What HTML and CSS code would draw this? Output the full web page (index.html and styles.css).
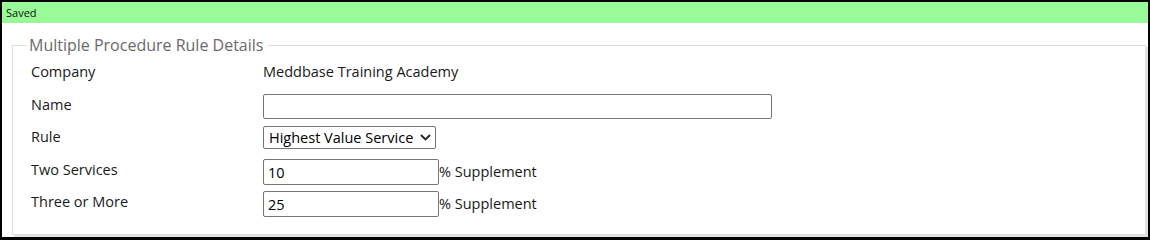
FILE: index.html
```html
<!DOCTYPE html>
<html>
<head>
<meta charset="utf-8">
<link rel="stylesheet" href="styles.css">
</head>
<body>
<div class="frame">
  <div class="status">Saved</div>
  <fieldset class="details">
    <legend>Multiple Procedure Rule Details</legend>
    <div class="grid">
      <div class="label first">Company</div>
      <div class="value first">Meddbase Training Academy</div>

      <div class="label">Name</div>
      <div class="value"><input class="text wide" type="text" value=""></div>

      <div class="label">Rule</div>
      <div class="value">
        <span class="select-wrap">
          <select class="select"><option>Highest Value Service</option></select>
          <svg class="chev" width="11" height="7" viewBox="0 0 11 7"><path d="M1 1l4.5 4.5L10 1" fill="none" stroke="#222" stroke-width="1.8"/></svg>
        </span>
      </div>

      <div class="label">Two Services</div>
      <div class="value"><input class="text short" type="text" value="10"><span class="suffix">% Supplement</span></div>

      <div class="label">Three or More</div>
      <div class="value"><input class="text short" type="text" value="25"><span class="suffix">% Supplement</span></div>
    </div>
  </fieldset>
</div>
</body>
</html>
```

FILE: styles.css
```css
html, body {
  margin: 0;
  padding: 0;
  background: #fff;
}

.frame {
  box-sizing: border-box;
  width: 1150px;
  height: 240px;
  border: solid #000;
  border-width: 2px 2px 3px 2px;
  display: flex;
  flex-direction: column;
  font-family: "Open Sans", "Noto Sans", sans-serif;
  color: #1a1a1a;
}

.status {
  height: 21px;
  flex: none;
  background: #98fb98;
  font-size: 11px;
  line-height: 21px;
  padding-left: 4px;
  color: #111;
}

.details {
  flex: 1;
  margin: 12px 2px 2px 10px;
  padding: 7px 0 0 14px;
  border: 1px solid #dedede;
  box-shadow: 2px 2px 0 #e4e4e4;
  min-width: 0;
}

.details legend {
  padding: 0 5px 0 2px;
  font-size: 16px;
  line-height: 20px;
  color: #6a6a6a;
}

.grid {
  display: grid;
  grid-template-columns: 236px 1fr;
  grid-template-rows: 32px 32px 33px 32px 27px;
  align-items: start;
}

.label {
  padding: 1px 0 0 4px;
  font-size: 14.5px;
  line-height: 20px;
}

.label.first {
  padding-top: 0;
}

.value {
  display: flex;
  align-items: center;
  font-size: 14.5px;
  line-height: 20px;
}

.text {
  box-sizing: border-box;
  border: 1px solid #767676;
  border-radius: 2px;
  padding: 0 4px;
  font-family: inherit;
  font-size: 14.5px;
  color: #000;
  outline: none;
}

.text.wide {
  width: 509px;
  height: 25px;
}

.text.short {
  width: 176px;
  height: 26px;
}

.suffix {
  color: #1a1a1a;
}

.select-wrap {
  position: relative;
  display: inline-block;
}

.select {
  appearance: none;
  -webkit-appearance: none;
  box-sizing: border-box;
  width: 173px;
  height: 23px;
  border: 1px solid #767676;
  border-radius: 2px;
  background: #fff;
  padding: 0 20px 0 5px;
  font-family: inherit;
  font-size: 14.5px;
  color: #000;
  display: block;
}

.chev {
  position: absolute;
  right: 5px;
  top: 8px;
  pointer-events: none;
}
```
